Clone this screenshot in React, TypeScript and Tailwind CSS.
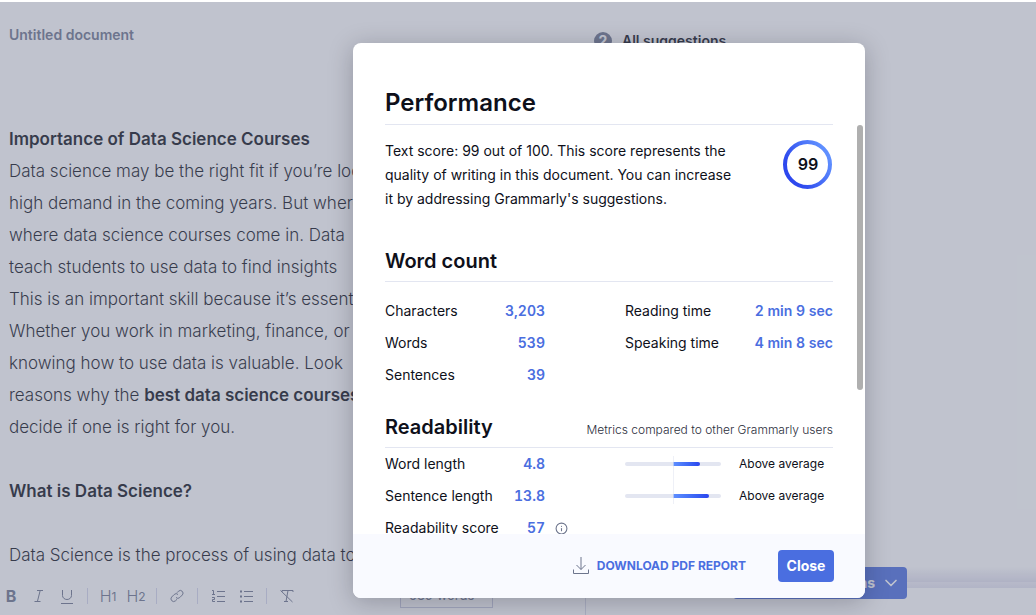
import React from 'react';
import { ChevronDown, Info } from 'lucide-react';

interface Stat {
  label: string;
  value: string;
}

interface Metric extends Stat {
  // share of the right half of the bar that is filled
  fill?: number;
  verdict?: string;
  info?: boolean;
}

const counts: Stat[] = [
  { label: 'Characters', value: '3,203' },
  { label: 'Words', value: '539' },
  { label: 'Sentences', value: '39' },
];

const times: Stat[] = [
  { label: 'Reading time', value: '2 min 9 sec' },
  { label: 'Speaking time', value: '4 min 8 sec' },
];

const metrics: Metric[] = [
  { label: 'Word length', value: '4.8', fill: 56, verdict: 'Above average' },
  { label: 'Sentence length', value: '13.8', fill: 75, verdict: 'Above average' },
  { label: 'Readability score', value: '57', info: true },
];

const paragraph = [
  'Data science may be the right fit if you’re looking',
  'high demand in the coming years. But where',
  'where data science courses come in. Data',
  'teach students to use data to find insights',
  'This is an important skill because it’s essential',
  'Whether you work in marketing, finance, or',
  'knowing how to use data is valuable. Look',
];

const ToolButton: React.FC<{ label: string; children: React.ReactNode }> = ({ label, children }) => (
  <button aria-label={label} className="flex h-6 w-6 shrink-0 items-center justify-center">
    {children}
  </button>
);

const Separator = () => <span className="mx-1 h-4 w-px shrink-0 bg-[#d5d6ec]" />;

const Icon: React.FC<{ children: React.ReactNode }> = ({ children }) => (
  <svg viewBox="0 0 16 16" className="h-4 w-4" fill="none" stroke="currentColor" strokeWidth="1">
    {children}
  </svg>
);

const Toolbar = () => (
  <div className="-ml-px flex h-10 shrink-0 items-center gap-1 pt-px text-[#6d758d]">
    <ToolButton label="Bold">
      <span className="text-base font-bold">B</span>
    </ToolButton>
    <ToolButton label="Italic">
      <Icon>
        <path d="M6 2.5h6M3.5 13.5h6M9.2 2.5l-2.8 11" />
      </Icon>
    </ToolButton>
    <ToolButton label="Underline">
      <Icon>
        <path d="M3.5 2v5.5a4.5 4 0 0 0 9 0V2" />
        <path d="M2 15.5h12" />
      </Icon>
    </ToolButton>
    <Separator />
    <ToolButton label="Heading 1">
      <span className="text-base font-light">H</span>
      <span className="pt-[3px] text-xs">1</span>
    </ToolButton>
    <ToolButton label="Heading 2">
      <span className="text-base font-light">H</span>
      <span className="pt-[3px] text-xs">2</span>
    </ToolButton>
    <Separator />
    <ToolButton label="Link">
      <Icon>
        <path d="M7 9.500a2.700 2.700 0 0 0 3.800 0l2.600-2.600a2.700 2.700 0 0 0-3.800-3.800L8 4.700" />
        <path d="M9 6.500a2.700 2.700 0 0 0-3.800 0l-2.600 2.600a2.700 2.700 0 0 0 3.800 3.800L8 11.300" />
      </Icon>
    </ToolButton>
    <Separator />
    <ToolButton label="Numbered list">
      <Icon>
        <path d="M7 3.500h8M7 8.500h8M7 13.500h8" />
        <path d="M2 2.500h1.500v4M2 6.500h3M2 9.500h2.500v2H2.500v2H5" />
      </Icon>
    </ToolButton>
    <ToolButton label="Bulleted list">
      <Icon>
        <path d="M6 3.500h9M6 8.500h9M6 13.500h9" />
        <path d="M2 3.500h2M2 8.500h2M2 13.500h2" strokeWidth="2" />
      </Icon>
    </ToolButton>
    <Separator />
    <ToolButton label="Clear formatting">
      <Icon>
        <path d="M3 4V2.500h11V4M9 2.500l-2 11M5 13.500h4M1.500 2.500l12 11.500" />
      </Icon>
    </ToolButton>
  </div>
);

const Editor = () => (
  <section className="flex w-[586px] shrink-0 flex-col">
    <h1 className="pl-[9px] pt-[23px] text-sm font-semibold leading-5 text-[#6d758d]">Untitled document</h1>
    <article className="min-h-0 flex-1 overflow-hidden whitespace-nowrap pl-[9px] pt-[78px] text-[17px] font-light leading-8 text-[#0e101a]">
      <h2 className="font-semibold">Importance of Data Science Courses</h2>
      {paragraph.map((line) => (
        <p key={line}>{line}</p>
      ))}
      <p>
        reasons why the <strong className="font-semibold">best data science courses</strong>
      </p>
      <p>decide if one is right for you.</p>
      <h2 className="pt-8 font-semibold">What is Data Science?</h2>
      <p className="pt-8">Data Science is the process of using data to</p>
    </article>
    <div className="flex items-start justify-between border-r border-[#d9dae8] pr-[92px]">
      <Toolbar />
      <button className="mt-[9px] flex h-6 w-[93px] items-center gap-1 border border-[#c9cbe0] pl-2 text-[13px] text-[#6d758d]">
        539 words <ChevronDown className="h-3 w-3" strokeWidth={2} />
      </button>
    </div>
  </section>
);

const Suggestions = () => (
  <section className="flex min-w-0 flex-1 flex-col justify-between pb-4 pt-[29px]">
    <div className="flex items-center gap-[10px] pl-2">
      <span className="flex h-[18px] w-[18px] items-center justify-center rounded-full bg-[#6d758d] text-sm font-bold text-white">
        2
      </span>
      <h2 className="text-sm font-semibold leading-5 text-[#0e101a]">All suggestions</h2>
    </div>
    <div className="flex items-start">
      <button className="ml-[147px] flex h-8 w-[174px] shrink-0 items-center justify-end gap-[6px] rounded bg-[#4a6ee0] pr-[6px] text-sm font-bold text-white">
        See suggestions <ChevronDown className="h-5 w-5" strokeWidth={2} />
      </button>
      <div className="flex-1">
        <div className="h-2 bg-linear-to-b from-white to-[#eeeef5]" />
        <div className="h-[7px] bg-linear-to-b from-[#f0eff7] to-[#e2e1ee]" />
        <div className="h-[6px] bg-linear-to-b from-[#efeef7] to-[#e6e5f1]" />
      </div>
    </div>
  </section>
);

const StatRow: React.FC<Stat> = ({ label, value }) => (
  <div className="flex h-8 items-center justify-between text-sm">
    <dt>{label}</dt>
    <dd className="font-semibold tabular-nums text-[#4a6ee0]">{value}</dd>
  </div>
);

const ScoreRing = () => (
  <div className="relative h-[50px] w-[50px] shrink-0">
    <svg viewBox="0 0 50 50" className="h-full w-full" fill="none">
      <defs>
        <linearGradient id="ring" x1="0" y1="1" x2="1" y2="0.4">
          <stop offset="0" stopColor="#2b44ee" />
          <stop offset="0.3" stopColor="#2f4bee" />
          <stop offset="1" stopColor="#5f8fff" />
        </linearGradient>
      </defs>
      <circle cx="24.500" cy="25.500" r="22.500" stroke="url(#ring)" strokeWidth="4" />
    </svg>
    <span className="absolute inset-0 flex items-center justify-center text-base font-semibold tabular-nums">99</span>
  </div>
);

const MetricBar: React.FC<{ fill: number }> = ({ fill }) => (
  <div className="flex h-1 w-24 rounded-full bg-[#e3e6f1]">
    <div className="w-1/2" />
    <div className="w-1/2">
      <div className="h-1 rounded-r-full bg-linear-to-r from-[#5f8fff] to-[#2b44ee]" style={{ width: `${fill}%` }} />
    </div>
  </div>
);

const PerformanceDialog = () => (
  <div
    role="dialog"
    aria-labelledby="performance-title"
    className="relative flex h-full w-[512px] flex-col overflow-hidden rounded-lg bg-white text-[#0e101a] shadow-[0_4px_24px_rgba(14,16,26,0.25)]"
  >
    <div className="mx-8 border-b border-[#e3e6f1] pb-[5px] pt-[44px]">
      <h2 id="performance-title" className="text-2xl font-semibold leading-8">
        Performance
      </h2>
    </div>

    <div className="min-h-0 flex-1 overflow-y-auto px-8 [scrollbar-width:none]">
      <div className="flex justify-between pt-[14px]">
        <p className="w-[352px] text-sm leading-6">
          Text score: 99 out of 100. This score represents the quality of writing in this document. You can increase it
          by addressing Grammarly's suggestions.
        </p>
        <ScoreRing />
      </div>

      <h3 className="mt-9 border-b border-[#e3e6f1] pb-[6px] text-xl font-semibold leading-7">Word count</h3>
      <div className="mt-[13px] flex justify-between">
        <dl className="w-40">
          {counts.map((stat) => (
            <StatRow key={stat.label} {...stat} />
          ))}
        </dl>
        <dl className="w-52">
          {times.map((stat) => (
            <StatRow key={stat.label} {...stat} />
          ))}
        </dl>
      </div>

      <div className="mt-[22px] flex items-end justify-between border-b border-[#e3e6f1] pb-[6px]">
        <h3 className="text-xl font-semibold leading-7">Readability</h3>
        <p className="text-xs font-light leading-[22px] text-[#2b2e3c]">Metrics compared to other Grammarly users</p>
      </div>
      <div className="relative">
        {metrics.map(({ label, value, fill, verdict, info }) => (
          <div key={label} className="flex items-center">
            <dl className="w-40">
              <StatRow label={label} value={value} />
            </dl>
            {info && <Info className="ml-[10px] h-[13px] w-[13px] text-[#6d758d]" strokeWidth={2} />}
            {fill && (
              <div className="ml-20 flex items-center gap-[18px]">
                <MetricBar fill={fill} />
                <span className="text-xs">{verdict}</span>
              </div>
            )}
          </div>
        ))}
        <span className="absolute left-72 top-2 h-12 w-px bg-[#e3e6f1]/60" />
      </div>
    </div>

    <div className="flex h-16 shrink-0 items-center justify-end gap-8 bg-[#f9faff] pr-[31px]">
      <button className="flex items-center gap-2 text-xs font-bold text-[#4a6ee0]">
        <svg viewBox="0 0 16 18" className="h-[18px] w-4 text-[#6d758d]" fill="none" stroke="currentColor">
          <path d="M8 0v12.500M3.500 8L8 12.500 12.500 8M.5 12.500v4h15v-4" />
        </svg>
        DOWNLOAD PDF REPORT
      </button>
      <button className="h-8 w-14 rounded bg-[#4a6ee0] text-sm font-bold text-white">Close</button>
    </div>

    <span className="absolute right-[2px] top-[82px] h-[265px] w-[6px] rounded-full bg-[#afafaf]" />
  </div>
);

export default function App() {
  return (
    <div className="h-screen overflow-hidden bg-white pt-[2px] font-['Inter',sans-serif]">
      <div className="relative h-full">
        <main className="flex h-full">
          <Editor />
          <Suggestions />
        </main>
        <div className="absolute inset-0 flex justify-end bg-[#6d758d]/43 pb-[17px] pr-[171px] pt-[41px]">
          <PerformanceDialog />
        </div>
      </div>
    </div>
  );
}
